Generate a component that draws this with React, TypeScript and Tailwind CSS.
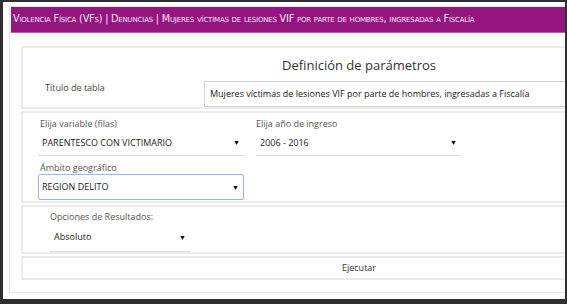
const Arrow = () => <span className="text-[7px] leading-none text-black">▼</span>;

const UnderSelect = ({ value, className }: { value: string; className: string }) => (
  <div className={`flex h-[26px] items-center justify-between border-b border-[#dcdcdc] pl-[4px] pr-[4px] ${className}`}>
    <span className="text-[9px] text-[#222]">{value}</span>
    <Arrow />
  </div>
);

export default function App() {
  return (
    <div
      className="h-[304px] w-[567px] bg-[#2f2f2f] pt-[2px] pl-[3px] pr-[2px] pb-[5px]"
      style={{ fontFamily: '"Open Sans", "Noto Sans", sans-serif' }}
    >
      <div className="h-full w-full overflow-hidden bg-white pt-[4px] pl-[6px]">
        <div className="w-[720px] border border-[#e6e6e6] pb-[12px]">
          {/* header */}
          <div
            className="ml-[1px] flex h-[26px] items-center border-b border-[#b45aa6] bg-[#941580] pl-[2px] text-[9.7px] tracking-[-0.2px] text-[#fbe4f6]"
            style={{ fontFamily: '"DejaVu Sans", Verdana, sans-serif', fontVariant: "small-caps" }}
          >
            Violencia Física (VFs) | Denuncias | Mujeres víctimas de lesiones VIF por parte de hombres, ingresadas a Fiscalía
          </div>

          <div className="flex flex-col gap-[2px] pt-[13px] pl-[11px]">
            {/* definición */}
            <div className="w-[676px] border-2 border-[#ececec] pt-[7px]">
              <div className="text-center text-[13px] leading-[20px] text-[#333]">Definición de parámetros</div>
              <div className="mt-[6px] flex items-start">
                <div className="w-[181px] pl-[22px] pt-[1px] text-[9px] leading-[12px] text-[#444]">Título de tabla</div>
                <div className="flex h-[26px] w-[480px] items-center border border-[#d4d4d4] pl-[5px] text-[9px] text-[#222]">
                  Mujeres víctimas de lesiones VIF por parte de hombres, ingresadas a Fiscalía
                </div>
              </div>
            </div>

            {/* variables */}
            <div className="w-[676px] border-2 border-[#ececec] pt-[4px] pb-[1px]">
              <div className="flex">
                <div className="ml-[15px] w-[206px]">
                  <div className="pl-[2px] text-[9px] leading-[13px] text-[#555]">Elija variable (filas)</div>
                  <UnderSelect value="PARENTESCO CON VICTIMARIO" className="w-[206px]" />
                </div>
                <div className="ml-[12px] w-[205px]">
                  <div className="text-[9px] leading-[13px] text-[#555]">Elija año de ingreso</div>
                  <UnderSelect value="2006 - 2016" className="w-[205px] pl-[3px]" />
                </div>
              </div>
              <div className="ml-[15px] mt-[5px] w-[206px]">
                <div className="pl-[2px] text-[9px] leading-[13px] text-[#555]">Ámbito geográfico</div>
                <div className="flex h-[26px] items-center justify-between rounded-[2px] border border-[#9db3ee] pl-[3px] pr-[4px]">
                  <span className="text-[9px] text-[#222]">REGION DELITO</span>
                  <Arrow />
                </div>
              </div>
            </div>

            {/* opciones */}
            <div className="w-[676px] border-2 border-[#ececec] pt-[3px]">
              <div className="ml-[27px] w-[140px]">
                <div className="text-[9px] leading-[13px] text-[#555]">Opciones de Resultados:</div>
                <UnderSelect value="Absoluto" className="h-[29px] w-[140px] pl-[3px] pr-[3px]" />
              </div>
            </div>

            {/* ejecutar */}
            <div className="flex h-[24px] w-[676px] items-center justify-center border-2 border-[#ececec] text-[9px] text-[#333]">
              Ejecutar
            </div>
          </div>
        </div>
      </div>
    </div>
  );
}
